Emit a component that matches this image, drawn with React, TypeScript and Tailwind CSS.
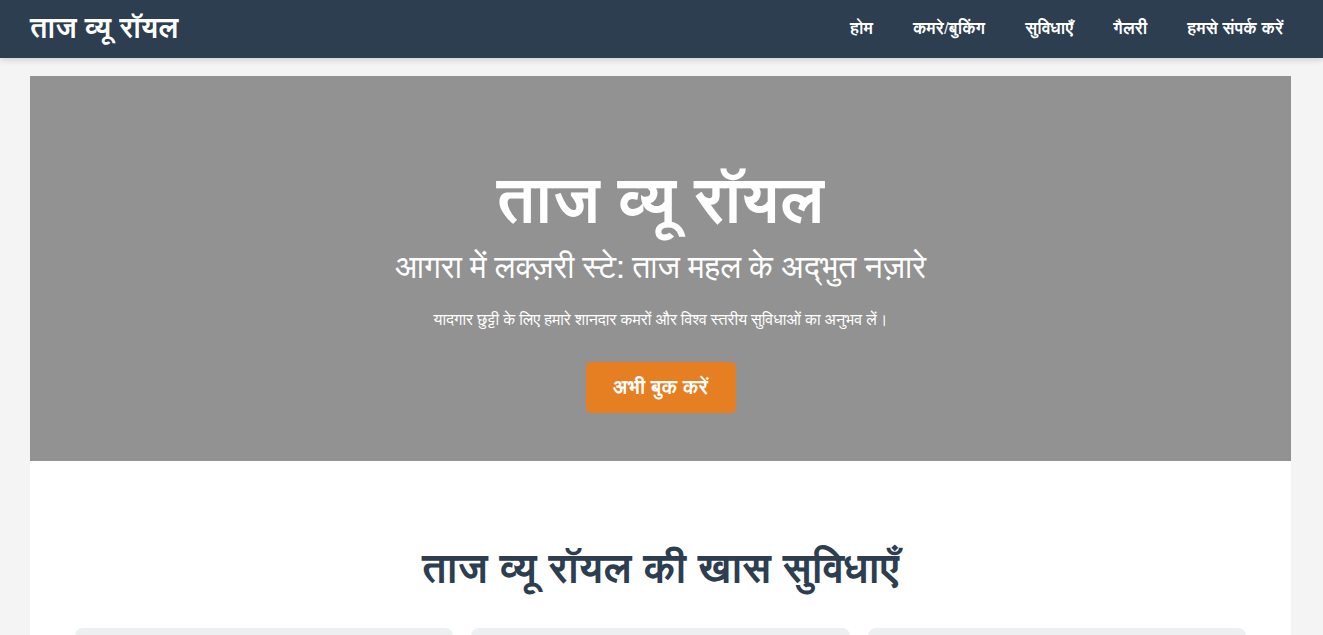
const navLinks = ["होम", "कमरे/बुकिंग", "सुविधाएँ", "गैलरी", "हमसे संपर्क करें"];

export default function App() {
  return (
    <div className="min-h-screen bg-[#f4f4f4] font-['FreeSans','Liberation_Sans',sans-serif] text-[#333]">
      <header className="flex h-[58px] items-center justify-between bg-[#2c3e50] px-[30px] text-white shadow-[0_2px_6px_rgba(0,0,0,0.15)]">
        <div className="text-[29px] font-bold">ताज व्यू रॉयल</div>
        <nav className="flex items-center gap-[40px] pr-[10px]">
          {navLinks.map((link) => (
            <a key={link} className="text-[17px] font-bold text-white">
              {link}
            </a>
          ))}
        </nav>
      </header>

      <main className="ml-[30px] mr-[32px] mt-[18px] bg-white">
        <section className="flex h-[385px] flex-col items-center bg-[#929292] pt-[89px] text-center text-white">
          <h1 className="text-[64px] font-bold leading-[1.2]">ताज व्यू रॉयल</h1>
          <p className="mt-[7px] text-[32px] leading-[1.2]">
            आगरा में लक्ज़री स्टे: ताज महल के अद्भुत नज़ारे
          </p>
          <p className="mt-[21px] text-[16px] leading-[24px]">
            यादगार छुट्टी के लिए हमारे शानदार कमरों और विश्व स्तरीय सुविधाओं का अनुभव लें।
          </p>
          <button className="mt-[30px] h-[51px] w-[150px] rounded-[5px] bg-[#e67e22] text-[20px] font-bold text-white">
            अभी बुक करें
          </button>
        </section>

        <section className="px-[45px] pt-[78px]">
          <h2 className="text-center text-[41px] font-bold text-[#2c3e50]">
            ताज व्यू रॉयल की खास सुविधाएँ
          </h2>
          <div className="mt-[27px] grid grid-cols-3 gap-[18px]">
            <div className="h-[120px] rounded-[8px] bg-[#ecf0f1]" />
            <div className="h-[120px] rounded-[8px] bg-[#ecf0f1]" />
            <div className="h-[120px] rounded-[8px] bg-[#ecf0f1]" />
          </div>
        </section>
      </main>
    </div>
  );
}
